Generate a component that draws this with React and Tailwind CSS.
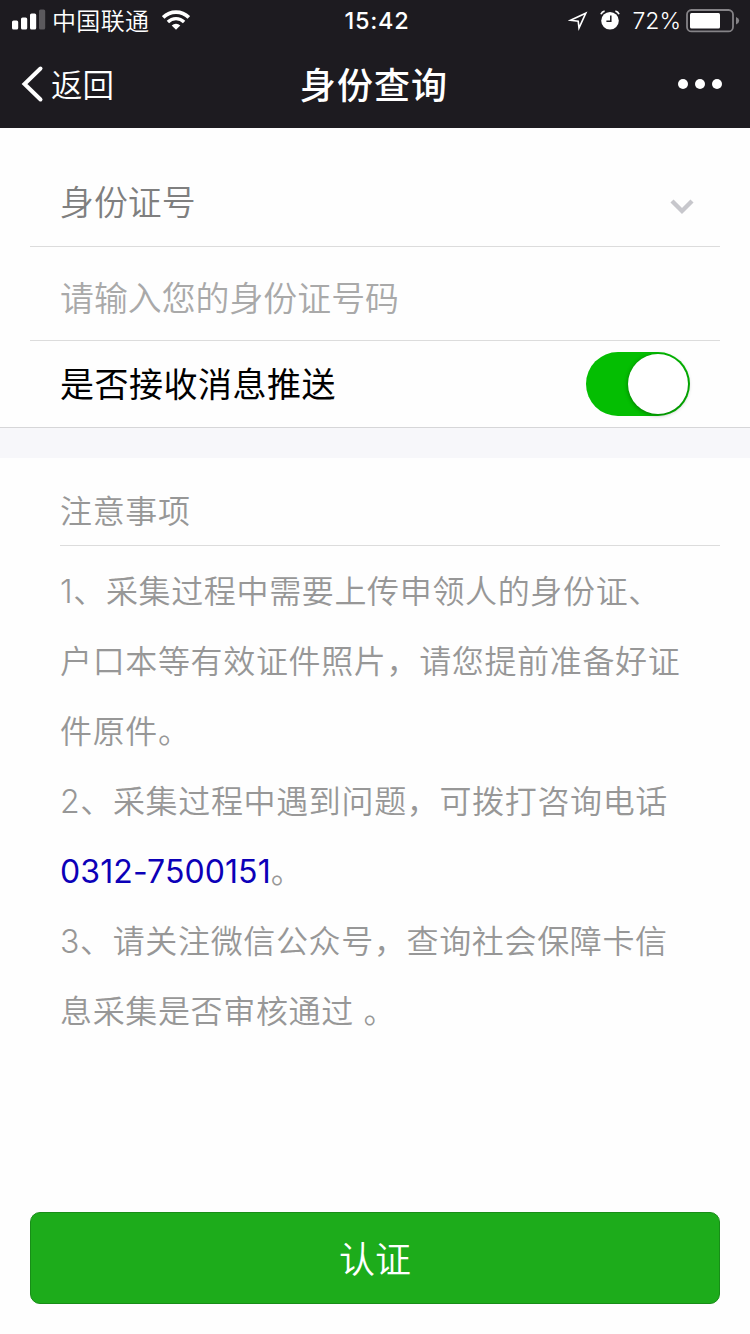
function SignalIcon() {
  return (
    <svg width="34" height="22" viewBox="0 0 34 22" className="shrink-0">
      <rect x="0" y="11.5" width="6.2" height="9" rx="1.6" fill="#fff" />
      <rect x="9" y="8.5" width="6.2" height="12" rx="1.6" fill="#fff" />
      <rect x="18" y="4.5" width="6.2" height="16" rx="1.6" fill="#fff" />
      <rect x="27" y="0.5" width="6.2" height="20" rx="1.6" fill="#5b595d" />
    </svg>
  );
}

function WifiIcon() {
  return (
    <svg width="28" height="20" viewBox="0 0 28 20" className="ml-[13px] shrink-0" fill="none" stroke="#fff">
      <path d="M1.2 7.4 A18.2 18.2 0 0 1 26.8 7.4" strokeWidth="3.6" />
      <path d="M5.9 12 A11.5 11.5 0 0 1 22.1 12" strokeWidth="3.3" />
      <path d="M14 19.8 L9.7 15.4 A6.2 6.2 0 0 1 18.3 15.4 Z" fill="#fff" stroke="none" />
    </svg>
  );
}

function LocationIcon() {
  return (
    <svg width="20" height="20" viewBox="0 0 20 20" className="mr-3 mt-0.5 shrink-0">
      <path d="M17.8 2.2 L11 17 L10.2 10.2 L2.4 9.2 Z" fill="none" stroke="#fff" strokeWidth="1.6" />
    </svg>
  );
}

function AlarmIcon() {
  return (
    <svg width="20" height="20" viewBox="0 0 20 20" className="shrink-0">
      <circle cx="10" cy="10.8" r="8.8" fill="#fff" />
      <path d="M1 4.2 Q2 1.6 4.6 1.2 M19 4.2 Q18 1.6 15.4 1.2" fill="none" stroke="#fff" strokeWidth="1.8" />
      <path d="M10.8 5.4 V11.2 H6.4" fill="none" stroke="#1d1b20" strokeWidth="1.5" />
    </svg>
  );
}

function BatteryIcon() {
  return (
    <svg width="54" height="24" viewBox="0 0 54 24" className="mt-px shrink-0">
      <rect x="1" y="1" width="46" height="21.4" rx="4.5" fill="none" stroke="#858387" strokeWidth="1.8" />
      <rect x="4" y="4" width="30" height="15.4" rx="1.5" fill="#fff" />
      <path d="M50 8 Q53.2 9.4 53.2 11.7 Q53.2 14 50 15.4 Z" fill="#858387" />
    </svg>
  );
}

const notes = [
  { text: "1、采集过程中需要上传申领人的身份证、" },
  { text: "户口本等有效证件照片，请您提前准备好证" },
  { text: "件原件。" },
  { text: "2、采集过程中遇到问题，可拨打咨询电话" },
  { phone: "0312-7500151", text: "。" },
  { text: "3、请关注微信公众号，查询社会保障卡信" },
  { text: "息采集是否审核通过 。" },
];

export default function App() {
  return (
    <div className="flex h-[1334px] w-[750px] flex-col overflow-hidden bg-[#fefefe] font-['Inter','Noto_Sans_CJK_SC',sans-serif] font-[350]">
      <header className="h-32 shrink-0 bg-[#1d1b20] text-white">
        <div className="grid h-10 grid-cols-[1fr_auto_1fr] items-center">
          <div className="flex items-center pl-3">
            <SignalIcon />
            <span className="ml-1.5 pt-[3px] text-[24px] leading-[37px] tracking-[0.35px]">中国联通</span>
            <WifiIcon />
          </div>
          <div className="pl-1 pt-0.5 text-[23.5px] font-medium leading-[38px] tracking-[0.7px]">15:42</div>
          <div className="flex items-center justify-end pr-2.5">
            <LocationIcon />
            <AlarmIcon />
            <span className="ml-3 mr-[5px] pt-0.5 text-[23px] leading-[38px]">72%</span>
            <BatteryIcon />
          </div>
        </div>
        <div className="grid h-[88px] grid-cols-[1fr_auto_1fr] items-center">
          <div className="flex items-center pl-5">
            <svg width="24" height="38" viewBox="0 0 24 38">
              <path d="M20.5 3.5 L4.5 19 L20.5 34.5" fill="none" stroke="#fff" strokeWidth="4" strokeLinecap="round" />
            </svg>
            <span className="ml-[7px] pt-[3px] text-[31.5px] leading-[44px]">返回</span>
          </div>
          <h1 className="pr-0.5 pt-[3px] text-[36px] font-medium leading-[44px] tracking-[1.1px]">身份查询</h1>
          <div className="flex justify-end gap-[7px] pr-7">
            <i className="size-2.5 rounded-full bg-white" />
            <i className="size-2.5 rounded-full bg-white" />
            <i className="size-2.5 rounded-full bg-white" />
          </div>
        </div>
      </header>

      <section className="shrink-0 border-b border-[#d6d6d8]">
        <div className="mx-[30px] flex h-[119px] items-center justify-between border-b border-[#dcdcdc] pl-[30px] pr-[26px] pt-8">
          <span className="text-[33.9px] leading-[48px] text-[#7f7f7f]">身份证号</span>
          <svg width="24" height="18" viewBox="0 0 24 18" className="mt-2">
            <path d="M2 3 L12 13 L22 3" fill="none" stroke="#c7c7cc" strokeWidth="4.4" />
          </svg>
        </div>
        <div className="mx-[30px] flex h-[94px] items-center border-b border-[#dcdcdc] pl-[30px] pt-2.5">
          <span className="text-[33.9px] leading-[48px] text-[#a9a9a9]">请输入您的身份证号码</span>
        </div>
        <div className="flex h-[86px] items-center justify-between pl-[60px] pr-[60px]">
          <span className="pt-px text-[34px] font-normal leading-[48px] tracking-[0.5px] text-black">是否接收消息推送</span>
          <div className="flex h-16 w-[104px] justify-end rounded-full bg-[#04be02] p-0.5">
            <div className="h-[60px] w-[60px] rounded-full bg-white shadow-[0_1px_4px_rgba(0,0,0,0.4)]" />
          </div>
        </div>
      </section>

      <div className="h-[30px] shrink-0 bg-[#f7f7fa]" />

      <section className="shrink-0 pl-[60px] text-[32px] tracking-[0.65px] text-[#979797]">
        <h2 className="mr-[30px] h-[88px] border-b border-[#dcdcdc] pt-[30px] leading-[48px]">注意事项</h2>
        <div className="pt-[11px]">
          {notes.map((line) => (
            <p key={line.text + (line.phone || "")} className="h-[70px] whitespace-pre leading-[70px]">
              {line.phone && <span className="font-normal tracking-[0.1px] text-[#0c00b8]">{line.phone}</span>}
              {line.text}
            </p>
          ))}
        </div>
      </section>

      <button className="mx-[30px] mb-[30px] mt-auto h-[92px] shrink-0 rounded-[10px] border border-[#188d18] bg-[#1dac1b] pt-[3px] text-[36px] leading-[48px] text-white">
        认证
      </button>
    </div>
  );
}
